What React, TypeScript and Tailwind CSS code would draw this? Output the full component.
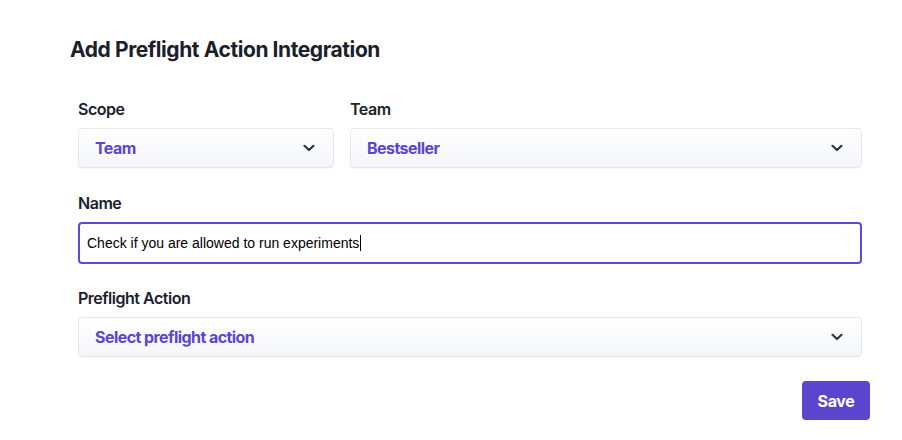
import React from "react";

function Chevron() {
  return (
    <svg width="12" height="8" viewBox="0 0 12 8" fill="none" stroke="#2d3748" strokeWidth="2.2" strokeLinecap="round" strokeLinejoin="round">
      <polyline points="1.5 1.8 6 6 10.5 1.8" />
    </svg>
  );
}

function Select({ value }: { value: string }) {
  return (
    <div className="flex h-[40px] items-center justify-between rounded-[4px] border border-[#e2e8f0] bg-gradient-to-b from-white to-[#f5f6fa] pl-[16px] pr-[18px] shadow-[0_1px_1px_rgba(0,0,0,0.03)]">
      <span className="text-[16px] font-bold tracking-[-0.035em] text-[#5a45cf]">{value}</span>
      <Chevron />
    </div>
  );
}

const labelCls = "mb-[7px] text-[16px] font-semibold leading-[24px] tracking-[-0.03em] text-[#1a202c]";

export default function App() {
  return (
    <div className="h-[440px] w-[902px] bg-white" style={{ fontFamily: "Inter, 'Noto Sans', sans-serif" }}>
      <div className="ml-[70px] w-[800px] pt-[36px]">
        <h1 className="text-[21px] font-bold leading-[28px] tracking-[-0.02em] text-[#1a202c]">Add Preflight Action Integration</h1>
        <div className="px-[8px] pt-[33px]">
          <div className="flex gap-[16px]">
            <div className="w-[256px]">
              <div className={labelCls}>Scope</div>
              <Select value="Team" />
            </div>
            <div className="flex-1">
              <div className={labelCls}>Team</div>
              <Select value="Bestseller" />
            </div>
          </div>
          <div className="mt-[23px]">
            <div className={labelCls}>Name</div>
            <div className="flex h-[42px] items-center rounded-[4px] border-2 border-[#5b4bd3] px-[7px]">
              <span className="text-[14px] text-black" style={{ fontFamily: "'Liberation Sans', Arial, sans-serif" }}>
                Check if you are allowed to run experiments
              </span>
              <span className="ml-[1px] h-[16px] w-[1px] bg-black" />
            </div>
          </div>
          <div className="mt-[22px]">
            <div className={labelCls}>Preflight Action</div>
            <Select value="Select preflight action" />
          </div>
        </div>
        <div className="mt-[24px] flex justify-end">
          <button className="h-[39px] w-[68px] rounded-[4px] bg-[#5b45cf] text-[16px] font-bold tracking-[-0.02em] text-white">Save</button>
        </div>
      </div>
    </div>
  );
}
